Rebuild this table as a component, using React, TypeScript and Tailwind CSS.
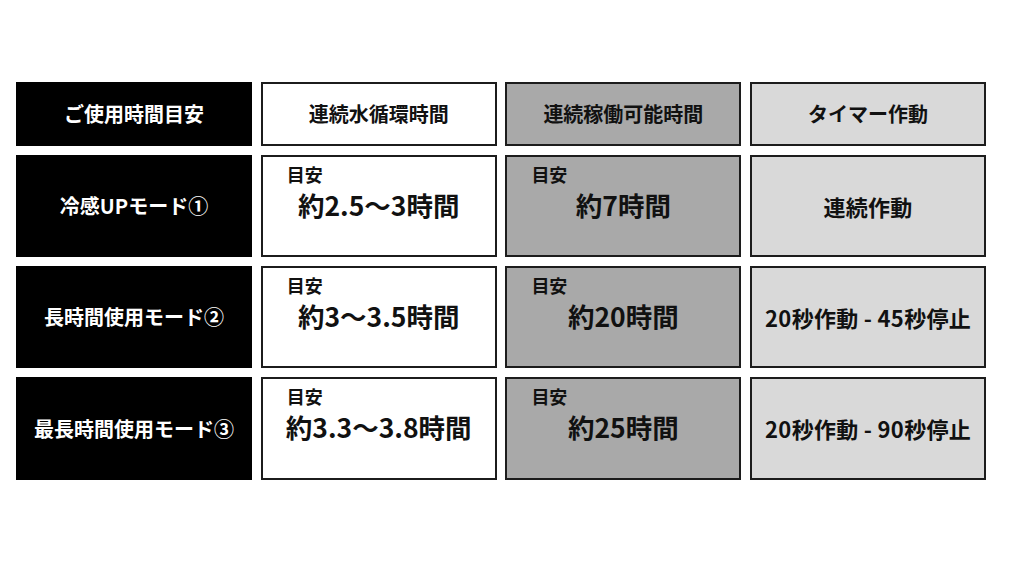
import React from "react";

const font = { fontFamily: '"Noto Sans CJK JP", "Noto Sans", sans-serif' };

type Row = { label: string; a: string; b: string; c: string };

const rows: Row[] = [
  { label: "冷感UPモード①", a: "約2.5〜3時間", b: "約7時間", c: "連続作動" },
  { label: "長時間使用モード②", a: "約3〜3.5時間", b: "約20時間", c: "20秒作動 - 45秒停止" },
  { label: "最長時間使用モード③", a: "約3.3〜3.8時間", b: "約25時間", c: "20秒作動 - 90秒停止" },
];

function Estimate({ text, bg }: { text: string; bg: string }) {
  return (
    <div className={`relative flex items-center justify-center border-2 border-[#1c1c1c] ${bg}`}>
      <span className="absolute left-[24px] top-[8px] text-[18px] font-bold leading-none text-[#111]">目安</span>
      <span className="text-[26.5px] font-bold leading-none text-[#111] -mt-[2px]">{text}</span>
    </div>
  );
}

export default function App() {
  return (
    <div className="w-[1012px] h-[565px] bg-white" style={font}>
      <div className="pt-[82px] pl-[16px]">
        <div className="grid grid-cols-[236px_236px_236px_236px] grid-rows-[64px_102px_102px_103px] gap-x-[8.7px] gap-y-[9px]">
          <div className="flex items-center justify-center bg-black text-white text-[20px] font-bold">ご使用時間目安</div>
          <div className="flex items-center justify-center border-2 border-[#1c1c1c] bg-white text-[#111] text-[20px] font-bold">連続水循環時間</div>
          <div className="flex items-center justify-center border-2 border-[#1c1c1c] bg-[#a9a9a9] text-[#111] text-[20px] font-bold">連続稼働可能時間</div>
          <div className="flex items-center justify-center border-2 border-[#1c1c1c] bg-[#d9d9d9] text-[#111] text-[20px] font-bold">タイマー作動</div>
          {rows.map((r) => (
            <React.Fragment key={r.label}>
              <div className="flex items-center justify-center bg-black text-white text-[20px] font-bold">{r.label}</div>
              <Estimate text={r.a} bg="bg-white" />
              <Estimate text={r.b} bg="bg-[#a9a9a9]" />
              <div className="flex items-center justify-center border-2 border-[#1c1c1c] bg-[#d9d9d9] text-[#111] text-[22px] font-bold tracking-[0.3px]">{r.c}</div>
            </React.Fragment>
          ))}
        </div>
      </div>
    </div>
  );
}
